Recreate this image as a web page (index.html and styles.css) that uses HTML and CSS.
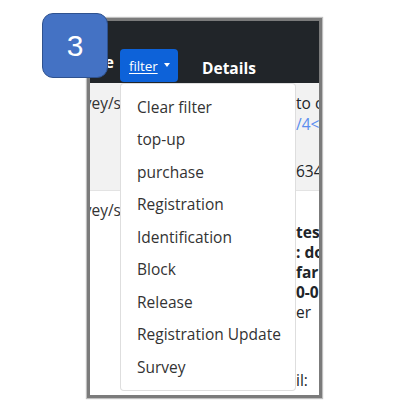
FILE: index.html
```html
<!DOCTYPE html>
<html>
<head>
<meta charset="utf-8">
<link rel="stylesheet" href="styles.css">
</head>
<body>
<div class="stage">
  <div class="frame">
    <div class="thead">
      <div class="th th-type"><span>Type</span></div>
      <div class="th th-filter">
        <span class="btn-filter"><span class="btn-label">filter</span><span class="caret"></span></span>
      </div>
      <div class="th th-details">Details</div>
    </div>
    <div class="row row-odd">
      <div class="cell cell-left"><span>survey/s</span></div>
      <div class="cell cell-mid"></div>
      <div class="cell cell-right">
        <div class="ln">to c</div>
        <div class="ln link">/4&lt;</div>
        <div class="ln gap">634</div>
      </div>
    </div>
    <div class="row row-even">
      <div class="cell cell-left"><span>survey/s</span></div>
      <div class="cell cell-mid"></div>
      <div class="cell cell-right second">
        <div class="ln b">tes</div>
        <div class="ln b">: do</div>
        <div class="ln b">far</div>
        <div class="ln b">0-0</div>
        <div class="ln">er</div>
        <div class="ln gap2">il:</div>
      </div>
    </div>
    <ul class="menu">
      <li>Clear filter</li>
      <li>top-up</li>
      <li>purchase</li>
      <li>Registration</li>
      <li>Identification</li>
      <li>Block</li>
      <li>Release</li>
      <li>Registration Update</li>
      <li>Survey</li>
    </ul>
  </div>
  <div class="badge">3</div>
</div>
</body>
</html>
```

FILE: styles.css
```css
html, body {
  margin: 0;
  padding: 0;
  background: #ffffff;
}
.stage {
  position: relative;
  width: 400px;
  height: 414px;
  overflow: hidden;
  font-family: "Open Sans", "Noto Sans", sans-serif;
  padding-top: 18px;
  box-sizing: border-box;
}
.frame {
  position: relative;
  margin-left: 87px;
  width: 229px;
  height: 374px;
  border: 3px solid #7b7b7b;
  box-shadow: 0 0 1px 1px rgba(0,0,0,0.25);
  overflow: hidden;
  background: #fff;
  color: #212529;
}
.thead {
  height: 62px;
  background: #212529;
  display: flex;
  align-items: flex-end;
  color: #fff;
  font-weight: 700;
  font-size: 15.5px;
}
.th-type {
  width: 30px;
  display: flex;
  justify-content: flex-end;
  padding-bottom: 10px;
  overflow: visible;
  white-space: nowrap;
}
.th-type span {
  margin-right: 6px;
}
.th-filter {
  padding-bottom: 1px;
}
.btn-filter {
  display: flex;
  align-items: center;
  width: 58px;
  height: 33px;
  box-sizing: border-box;
  padding-left: 9px;
  background: #0d62d9;
  border-radius: 4px;
  font-weight: 400;
  font-size: 13.5px;
  letter-spacing: -0.1px;
}
.btn-label {
  text-decoration: underline;
  text-underline-offset: 2px;
}
.caret {
  width: 0;
  height: 0;
  margin-left: 6px;
  border-left: 3.5px solid transparent;
  border-right: 3.5px solid transparent;
  border-top: 4px solid #fff;
  margin-top: -2px;
}
.th-details {
  margin-left: 24px;
  padding-bottom: 4px;
}
.row {
  display: grid;
  grid-template-columns: 30px 176px 23px;
  font-size: 15.5px;
  line-height: 20px;
}
.row-odd {
  height: 108px;
  background: #f2f2f2;
  border-bottom: 1px solid #e3e3e3;
  box-sizing: border-box;
}
.row-even {
  height: 204px;
}
.cell {
  overflow: hidden;
  white-space: nowrap;
}
.cell-left {
  display: flex;
  justify-content: flex-end;
  color: #333;
  padding-top: 10px;
}
.row-even .cell-left {
  padding-top: 9px;
}
.cell-left span {
  margin-right: -1px;
}
.cell-right {
  padding-top: 10px;
}
.cell-right.second {
  padding-top: 31px;
}
.ln.link {
  color: #5b8def;
  margin-top: 1px;
}
.ln.gap {
  margin-top: 27px;
}
.ln.b {
  font-weight: 700;
}
.ln.gap2 {
  margin-top: 48px;
}
.menu {
  position: absolute;
  left: 30px;
  top: 62px;
  width: 176px;
  box-sizing: border-box;
  margin: 0;
  padding: 6.5px 0;
  list-style: none;
  background: #fff;
  border: 1px solid rgba(0,0,0,0.13);
  border-radius: 4px;
  color: #333;
  font-size: 15.5px;
}
.menu li {
  padding: 4px 16px;
  line-height: 24.5px;
  white-space: nowrap;
}
.badge {
  position: absolute;
  left: 42px;
  top: 13px;
  width: 66px;
  height: 65px;
  box-sizing: border-box;
  background: #4472c4;
  border: 1.5px solid #2f528f;
  border-radius: 11px;
  color: #fff;
  font-family: "Liberation Sans", "Open Sans", sans-serif;
  font-size: 30px;
  display: flex;
  align-items: center;
  justify-content: center;
}
```
